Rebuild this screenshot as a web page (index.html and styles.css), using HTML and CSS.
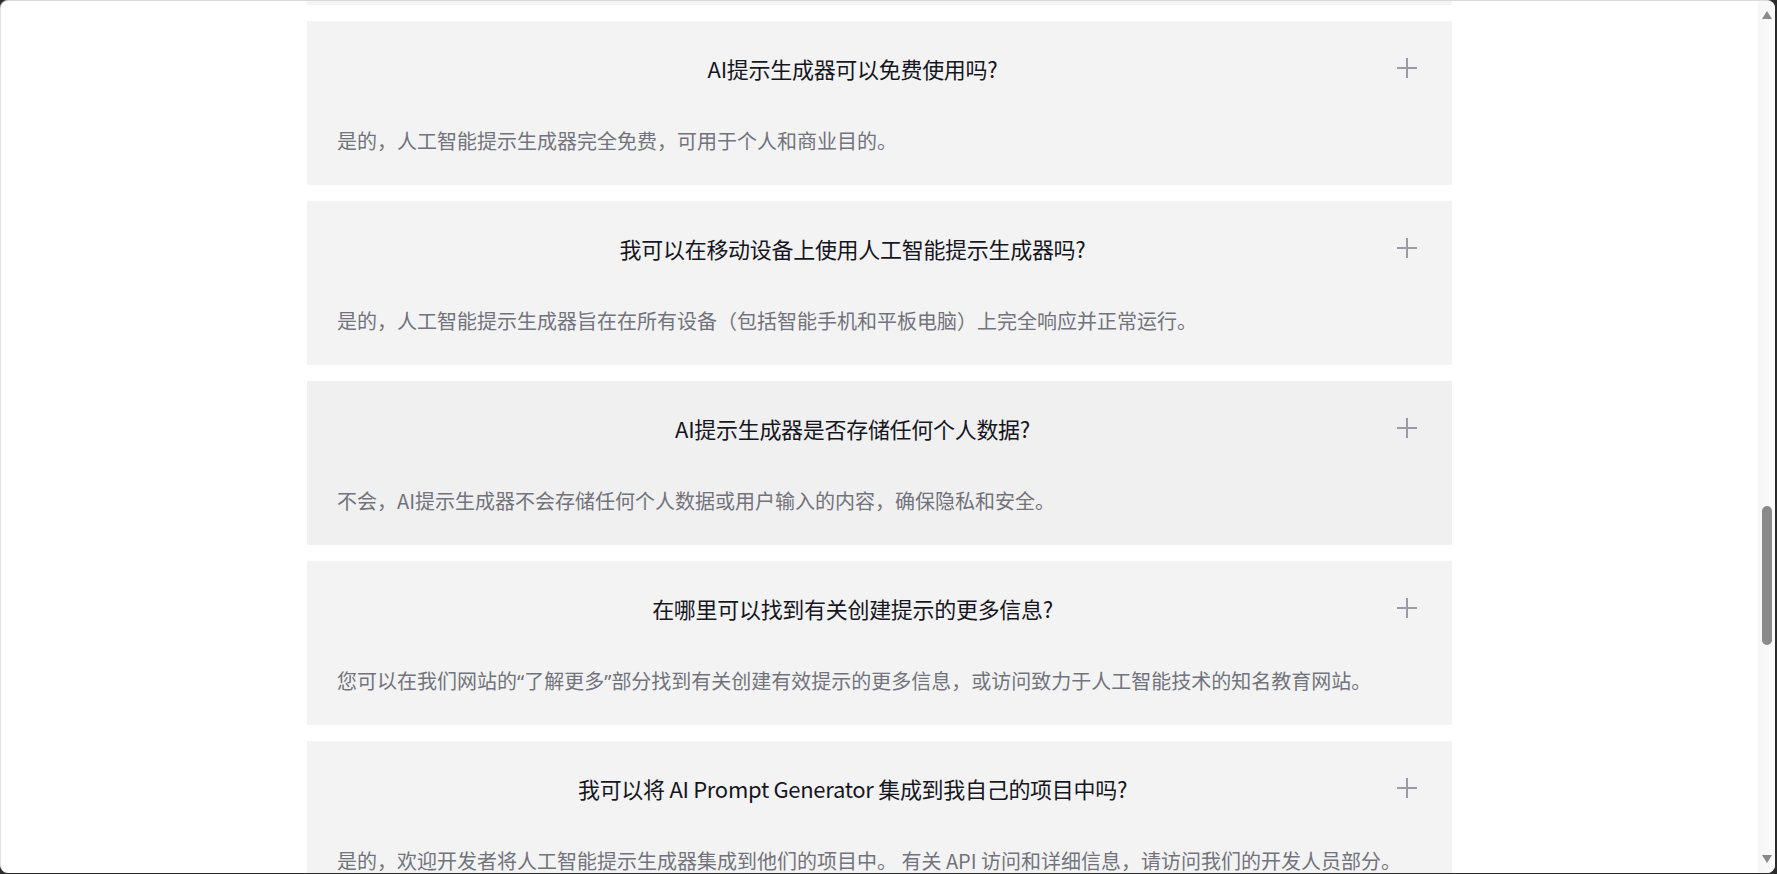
FILE: index.html
```html
<!DOCTYPE html>
<html lang="zh-CN">
<head>
<meta charset="utf-8">
<title>常见问题</title>
<link rel="stylesheet" href="styles.css">
</head>
<body>
<div class="window">
  <main class="content">
    <section class="faq">
      <div class="card card-prev"></div>
      <div class="card">
        <div class="card-head">
          <h3 class="question">AI提示生成器可以免费使用吗?</h3>
          <span class="toggle"><svg viewBox="0 0 20 20" width="20" height="20"><path d="M10 0V20M0 10H20" stroke="#9b9ba5" stroke-width="2" fill="none"/></svg></span>
        </div>
        <p class="answer">是的，人工智能提示生成器完全免费，可用于个人和商业目的。</p>
      </div>
      <div class="card">
        <div class="card-head">
          <h3 class="question">我可以在移动设备上使用人工智能提示生成器吗?</h3>
          <span class="toggle"><svg viewBox="0 0 20 20" width="20" height="20"><path d="M10 0V20M0 10H20" stroke="#9b9ba5" stroke-width="2" fill="none"/></svg></span>
        </div>
        <p class="answer">是的，人工智能提示生成器旨在在所有设备（包括智能手机和平板电脑）上完全响应并正常运行。</p>
      </div>
      <div class="card card-hover">
        <div class="card-head">
          <h3 class="question">AI提示生成器是否存储任何个人数据?</h3>
          <span class="toggle"><svg viewBox="0 0 20 20" width="20" height="20"><path d="M10 0V20M0 10H20" stroke="#9b9ba5" stroke-width="2" fill="none"/></svg></span>
        </div>
        <p class="answer">不会，AI提示生成器不会存储任何个人数据或用户输入的内容，确保隐私和安全。</p>
      </div>
      <div class="card">
        <div class="card-head">
          <h3 class="question">在哪里可以找到有关创建提示的更多信息?</h3>
          <span class="toggle"><svg viewBox="0 0 20 20" width="20" height="20"><path d="M10 0V20M0 10H20" stroke="#9b9ba5" stroke-width="2" fill="none"/></svg></span>
        </div>
        <p class="answer">您可以在我们网站的<span class="q">“</span>了解更多<span class="q">”</span>部分找到有关创建有效提示的更多信息，或访问致力于人工智能技术的知名教育网站。</p>
      </div>
      <div class="card">
        <div class="card-head">
          <h3 class="question">我可以将 AI Prompt Generator 集成到我自己的项目中吗?</h3>
          <span class="toggle"><svg viewBox="0 0 20 20" width="20" height="20"><path d="M10 0V20M0 10H20" stroke="#9b9ba5" stroke-width="2" fill="none"/></svg></span>
        </div>
        <p class="answer">是的，欢迎开发者将人工智能提示生成器集成到他们的项目中。 有关 API 访问和详细信息，请访问我们的开发人员部分。</p>
      </div>
    </section>
  </main>
  <div class="scrollbar">
    <span class="arrow arrow-up"></span>
    <span class="thumb"></span>
    <span class="spacer"></span>
    <span class="arrow arrow-down"></span>
  </div>
</div>
</body>
</html>
```

FILE: styles.css
```css
html, body {
  margin: 0;
  padding: 0;
  height: 100%;
  overflow: hidden;
}
body {
  background: #2b2b2b;
  font-family: "Noto Sans CJK SC", "Noto Sans", "Liberation Sans", sans-serif;
}
.window {
  box-sizing: border-box;
  width: 1775px;
  height: 873px;
  background: #ffffff;
  border-top: 1px solid #d9d9d9;
  border-left: 1px solid #e2e2e2;
  border-radius: 8px;
  overflow: hidden;
  display: flex;
}
.content {
  flex: 1;
  overflow: hidden;
}
.faq {
  width: 1145px;
  margin: -160px auto 0;
  display: flex;
  flex-direction: column;
  gap: 16px;
}
.card {
  box-sizing: border-box;
  height: 164px;
  background: #f3f3f3;
  padding: 32px 30px 29px;
}
.card-hover {
  background: #f0f0f0;
}
.card-head {
  display: flex;
  align-items: center;
  height: 30px;
}
.question {
  flex: 1;
  margin: 0;
  text-align: center;
  font-size: 22px;
  line-height: 30px;
  font-weight: 400;
  letter-spacing: -0.3px;
  color: #16161f;
}
.toggle {
  width: 20px;
  height: 20px;
  margin-left: 29px;
  margin-right: 5px;
  display: flex;
}
.answer {
  margin: 43px 0 0;
  font-size: 20px;
  line-height: 30px;
  color: #72737c;
  white-space: nowrap;
}
.q {
  font-family: "Noto Sans", "Liberation Sans", sans-serif;
}
.scrollbar {
  width: 17px;
  background: linear-gradient(to right, #f6f6f6, #fbfbfb);
  display: flex;
  flex-direction: column;
  align-items: center;
}
.arrow {
  width: 0;
  height: 0;
  border-left: 5px solid transparent;
  border-right: 5px solid transparent;
}
.arrow-up {
  margin-top: 10px;
  border-bottom: 8px solid #8a8a8a;
}
.arrow-down {
  margin-bottom: 10px;
  border-top: 8px solid #8a8a8a;
}
.thumb {
  width: 10px;
  height: 139px;
  margin-top: 487px;
  background: #8a8a8a;
  border-radius: 5px;
}
.spacer {
  flex: 1;
}
```
